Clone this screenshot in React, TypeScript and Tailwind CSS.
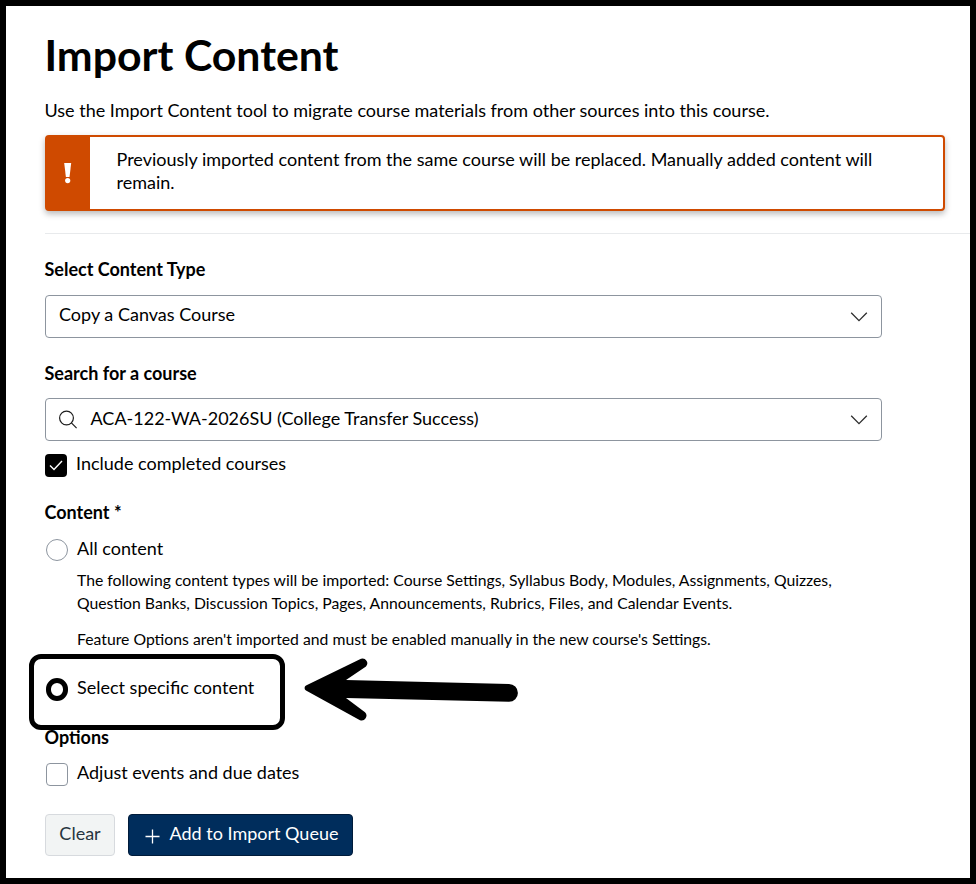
import type { ReactNode } from "react";

function Chevron() {
  return (
    <svg width="18" height="12" viewBox="0 0 18 12" fill="none" stroke="#2d2d2d" strokeWidth="1.3">
      <path d="M1.2 1.8 9 9.6 16.8 1.8" />
    </svg>
  );
}

function SelectBox({ children }: { children: ReactNode }) {
  return (
    <div className="flex h-[43px] w-[837px] items-center justify-between rounded-[4px] border border-[#8d959f] pl-[13px] pr-[13px]">
      <div className="flex items-center">{children}</div>
      <Chevron />
    </div>
  );
}

function Label({ children }: { children: ReactNode }) {
  return <div className="-ml-[0.5px] h-6 text-[18px] leading-[22px] font-bold">{children}</div>;
}

export default function App() {
  return (
    <div className="relative h-[884px] w-[976px] overflow-hidden border-[6px] border-black bg-white pl-[39px] font-[Lato,sans-serif] text-[18px] leading-[22px] text-black">
      <h1 className="mt-[23px] -ml-[0.5px] h-[52px] text-[42.8px] leading-[52px] font-bold whitespace-nowrap">Import Content</h1>
      <p className="mt-[18px] -ml-[0.5px] h-6 whitespace-nowrap">
        Use the Import Content tool to migrate course materials from other sources into this course.
      </p>

      <div className="mt-3 flex h-[76px] w-[900px] rounded-[4px] border-2 border-[#cf4a00] bg-white shadow-[0_3px_6px_rgba(0,0,0,0.28)]">
        <div className="flex w-[43px] items-center justify-center bg-[#cf4a00] pr-[2px]">
          <svg width="8" height="22" viewBox="0 0 8 22" fill="white">
            <path d="M0.200 1h7L5.500 15H1.900z" />
            <circle cx="3.700" cy="18.600" r="2.600" />
          </svg>
        </div>
        <p className="pt-[11px] pl-[26.5px] leading-[23px] whitespace-nowrap">
          Previously imported content from the same course will be replaced. Manually added content will
          <br />
          remain.
        </p>
      </div>

      <hr className="mt-[22px] border-[#e8eaec]" />

      <div className="mt-6">
        <Label>Select Content Type</Label>
      </div>
      <div className="mt-[13px]">
        <SelectBox>
          <span className="pb-[5px]">Copy a Canvas Course</span>
        </SelectBox>
      </div>

      <div className="mt-6">
        <Label>Search for a course</Label>
      </div>
      <div className="mt-3">
        <SelectBox>
          <svg width="19" height="19" viewBox="0 0 19 19" fill="none" stroke="#1c1c1c" strokeWidth="1.2">
            <circle cx="7.500" cy="8" r="6.900" />
            <path d="m12.400 12.900 5.200 5.200" />
          </svg>
          <span className="pb-[4px] pl-[12.5px]">ACA-122-WA-2026SU (College Transfer Success)</span>
        </SelectBox>
      </div>

      <div className="mt-[11px] flex h-6">
        <div className="mt-[2px] flex h-[23px] w-[22px] items-center justify-center rounded-[4px] bg-black">
          <svg width="14" height="11" viewBox="0 0 14 11" fill="none" stroke="white" strokeWidth="1.4">
            <path d="m1 5.500 4 4L13 1" />
          </svg>
        </div>
        <span className="pl-[9px]">Include completed courses</span>
      </div>

      <div className="mt-[25px]">
        <Label>Content *</Label>
      </div>
      <div className="mt-3 flex h-6 pl-px">
        <div className="mt-[2px] size-[22px] rounded-full border border-[#8d959f]" />
        <span className="pl-[9px]">All content</span>
      </div>
      <div className="mt-[7px] pl-8 text-[15.76px] leading-[23px] whitespace-nowrap">
        <p>
          The following content types will be imported: Course Settings, Syllabus Body, Modules, Assignments, Quizzes,
          <br />
          Question Banks, Discussion Topics, Pages, Announcements, Rubrics, Files, and Calendar Events.
        </p>
        <p className="mt-[13px]">
          Feature Options aren't imported and must be enabled manually in the new course's Settings.
        </p>
      </div>

      <div className="mt-[26px] flex h-6 pl-px">
        <div className="mt-[2px] h-[23px] w-[22px] rounded-full border-[5px] border-black" />
        <span className="pl-[9px]">Select specific content</span>
      </div>

      <div className="mt-[26px]">
        <Label>Options</Label>
      </div>
      <div className="mt-[11px] flex h-6 pl-px">
        <div className="mt-[2px] h-[23px] w-[22px] rounded-[4px] border border-[#8d959f]" />
        <span className="pl-[9px]">Adjust events and due dates</span>
      </div>

      <div className="mt-[29px] flex gap-[13px]">
        <button className="h-[42px] w-[70px] rounded-[4px] border border-[#d7dade] bg-[#f2f4f4] pb-[4px] text-[#273540]">
          Clear
        </button>
        <button className="flex h-[42px] w-[225px] items-center rounded-[4px] border border-[#001b3a] bg-[#002d5c] pl-[15.5px] text-white">
          <svg className="mt-[2px]" width="15" height="15" viewBox="0 0 15 15" stroke="white" strokeWidth="1.3">
            <path d="M7.500 0.500v14M0.500 7.500h14" />
          </svg>
          <span className="pb-[4px] pl-[10px] whitespace-nowrap">Add to Import Queue</span>
        </button>
      </div>

      <div className="absolute top-[648px] left-[23px] h-[76px] w-[256px] rounded-[12px] border-[5px] border-black" />
      <svg className="absolute top-[644px] left-[294px]" width="224" height="76" viewBox="300 650 224 76">
        <path
          d="M306 685.500 L361 658.700 A4.800 4.800 0 0 1 366 666.500 L346 680 L509 684 A8.900 8.900 0 0 1 509 701.800 L346 698 L365 712.300 A4.800 4.800 0 0 1 360 720.200 L306 690.500 A2.900 2.900 0 0 1 306 685.500 Z"
          fill="black"
        />
      </svg>
    </div>
  );
}
